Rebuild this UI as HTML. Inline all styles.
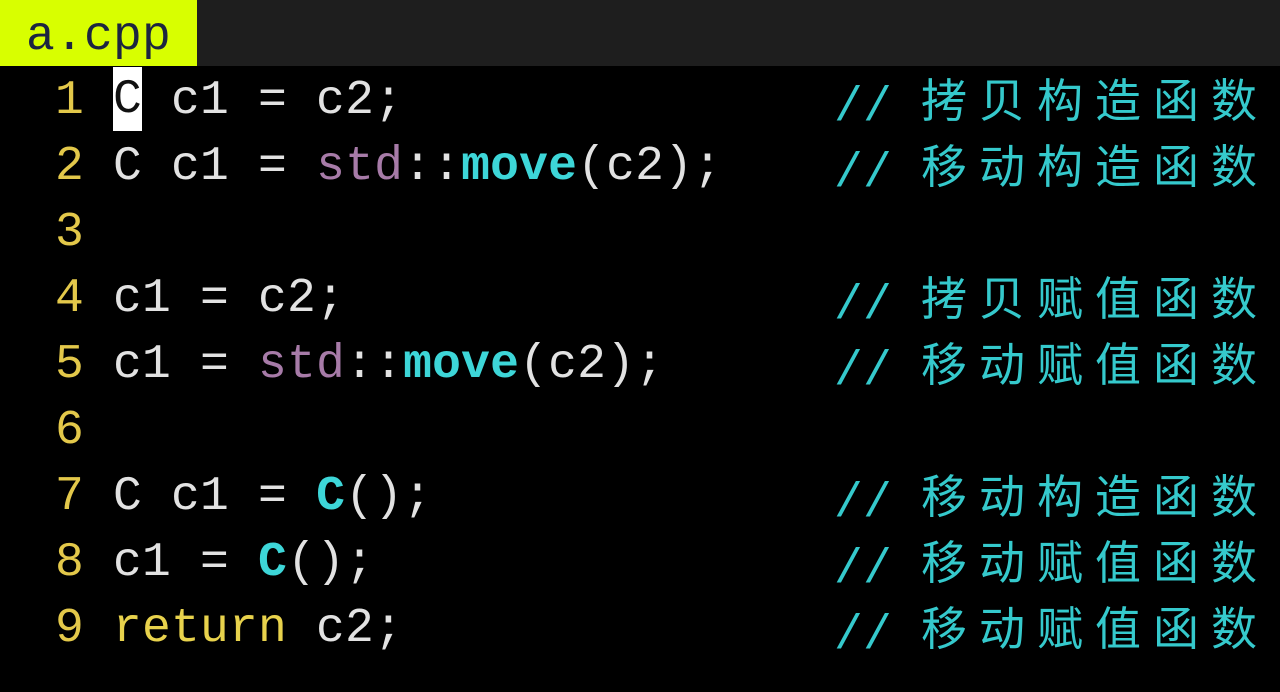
<!DOCTYPE html>
<html><head><meta charset="utf-8">
<style>
html,body{margin:0;padding:0;background:#000;width:1280px;height:692px;overflow:hidden}
.top{position:absolute;left:0;top:0;width:1280px;height:66px;background:#1e1e1e}
.tab{position:absolute;left:0;top:0;width:197px;height:66px;background:#d8ff00;color:#1c2540;
 font:48px "Liberation Mono",monospace;line-height:74px;padding-left:26px;box-sizing:border-box;letter-spacing:0.2px}
.code{position:absolute;left:26px;top:68px;font:48px "Liberation Mono","Noto Sans CJK SC",monospace;letter-spacing:0.2px;color:#e2e2e2}
.l{height:66px;line-height:66px;position:relative;white-space:pre}
.n{color:#e3c84a}
.s{color:#a77ba8}
.m{color:#3dd6d8;font-weight:bold}
.r{color:#e8d24c}
.cur{background:#fff;color:#111;display:inline-block;height:64px;vertical-align:top;margin-top:-1px}
.c{position:absolute;left:808px;top:0;color:#35c9cc}
.c i{font-style:normal;display:inline-block;width:58px;text-align:left;font-family:"Noto Sans CJK SC",sans-serif;font-size:46px;letter-spacing:0;position:relative;top:-3px}
</style></head><body>
<div class="top"></div>
<div class="tab">a.cpp</div>
<div class="code"><div class="l"><span class="n"> 1 </span><span class="cur">C</span> c1 = c2;<span class="c">// <i>拷</i><i>贝</i><i>构</i><i>造</i><i>函</i><i>数</i></span></div><div class="l"><span class="n"> 2 </span>C c1 = <span class="s">std</span>::<span class="m">move</span>(c2);<span class="c">// <i>移</i><i>动</i><i>构</i><i>造</i><i>函</i><i>数</i></span></div><div class="l"><span class="n"> 3 </span></div><div class="l"><span class="n"> 4 </span>c1 = c2;<span class="c">// <i>拷</i><i>贝</i><i>赋</i><i>值</i><i>函</i><i>数</i></span></div><div class="l"><span class="n"> 5 </span>c1 = <span class="s">std</span>::<span class="m">move</span>(c2);<span class="c">// <i>移</i><i>动</i><i>赋</i><i>值</i><i>函</i><i>数</i></span></div><div class="l"><span class="n"> 6 </span></div><div class="l"><span class="n"> 7 </span>C c1 = <span class="m">C</span>();<span class="c">// <i>移</i><i>动</i><i>构</i><i>造</i><i>函</i><i>数</i></span></div><div class="l"><span class="n"> 8 </span>c1 = <span class="m">C</span>();<span class="c">// <i>移</i><i>动</i><i>赋</i><i>值</i><i>函</i><i>数</i></span></div><div class="l"><span class="n"> 9 </span><span class="r">return</span> c2;<span class="c">// <i>移</i><i>动</i><i>赋</i><i>值</i><i>函</i><i>数</i></span></div></div>
</body></html>
